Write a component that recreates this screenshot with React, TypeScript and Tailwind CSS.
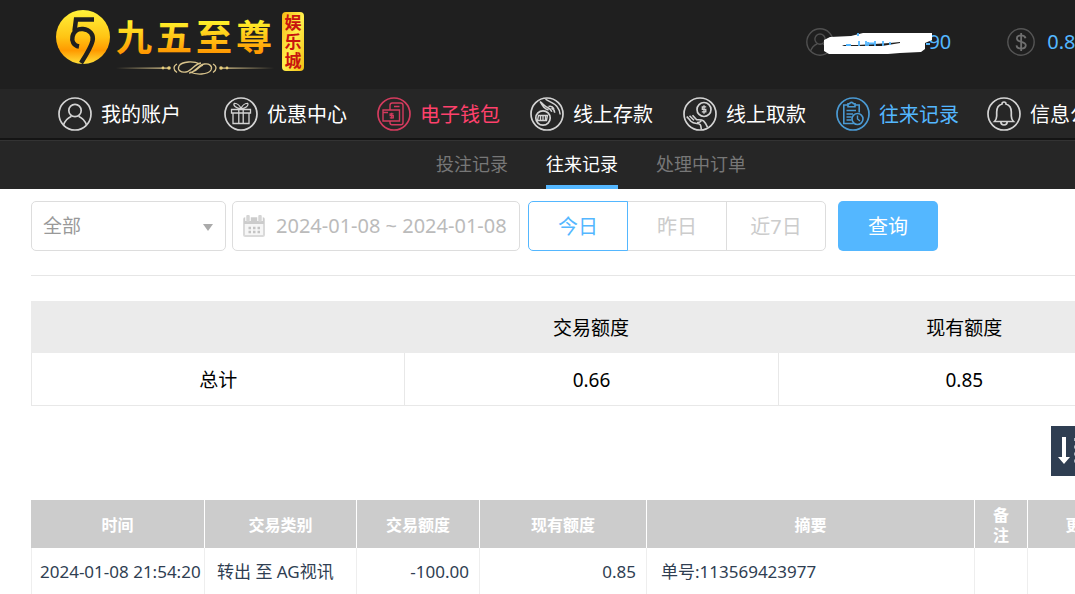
import { useState } from 'react';
import type { ReactNode } from 'react';
import clsx from 'clsx';

interface NavItem {
    label: string;
    icon: ReactNode;
    className: string;
}

const iconProps = {
    width: 34,
    height: 34,
    viewBox: '0 0 34 34',
    fill: 'none',
    stroke: 'currentColor',
    strokeWidth: 1.7,
    'aria-hidden': true,
};

function AccountIcon({ size = 34 }: { size?: number }) {
    return (
        <svg {...iconProps} width={size} height={size} className="shrink-0">
            <circle cx="17" cy="17" r="16" />
            <circle cx="17" cy="13.5" r="6.2" />
            <path d="M5.5 28c1.600-4.800 4.500-7.200 8-8.800M28.500 28c-1.600-4.800-4.500-7.200-8-8.800" />
        </svg>
    );
}

function GiftIcon() {
    return (
        <svg {...iconProps} className="shrink-0">
            <circle cx="17" cy="17" r="16" />
            <path d="M7.500 12.500h19v3.500h-19zM9 16v10.500h16V16M14.800 12.500v14M19.200 12.500v14" strokeWidth="1.3" />
            <path d="M17 11.800c-1-3-3.800-5.600-6.800-5.300-1.200 2.200 2 4.800 6.800 5.300zM17 11.800c1-3 3.800-5.600 6.800-5.300 1.200 2.200-2 4.800-6.800 5.300z" strokeWidth="1.3" />
        </svg>
    );
}

function WalletIcon() {
    return (
        <svg {...iconProps} className="shrink-0">
            <circle cx="17" cy="17" r="16" />
            <path d="M13 13V8.500c0-1.400.8-2.500 2.200-2.500h8.600c1.400 0 2.200 1 2.200 2.200v17.600c0 1.200-.8 2-2 2h-9c-1.200 0-2-.8-2-2V24M17 9.500h5.500" strokeWidth="1.4" />
            <path d="M6 13h16.500v11H6zM6 15.500h5M22.500 17v4" strokeWidth="1.4" />
            <path d="M16.500 16.800h-3.400v1.900h3.200v2.100h-3.500M14.700 15.800v6" strokeWidth="1.2" />
        </svg>
    );
}

function DepositIcon() {
    return (
        <svg {...iconProps} className="shrink-0">
            <circle cx="17" cy="17" r="16" />
            <circle cx="13" cy="21" r="7.200" />
            <path d="M8.500 18.500h9l-1 5h-9zM10.500 18v5M13 18v5M15.500 18v5" strokeWidth="1.3" />
            <path d="M10 4.500c3 2 4.500 4.800 8 6.200 2 .8 3.200 2.300 3.800 4.100M15.500 2.200c4 2.800 9 3.800 11.500 7.300 1.800 2.400 3 5 3.200 8M18.500 9.500c2.500-.8 4.300.2 5.500 2.300M21.500 11c2 .8 3 2.600 3.200 4.800M10 4.500c2.800 5 4.500 7.500 8.500 8.500" strokeWidth="1.5" />
        </svg>
    );
}

function WithdrawIcon() {
    return (
        <svg {...iconProps} className="shrink-0">
            <circle cx="17" cy="17" r="16" />
            <circle cx="21" cy="12.500" r="7" />
            <path d="M23.200 9.800h-3.900v2.500h3.500v2.600h-4M21 8.300v8.400" strokeWidth="1.3" />
            <path d="M3.800 19.500c1.400 1.800 2.800 3 4 4.800M6.500 18.800l4.500 4.400M9.500 18.300l4.200 4.400c1.800.2 5.200-.3 6.800 1.200 1.800 1.700 3.200 4.300 4 6.400M7.800 24.300c3.400 3.400 7.800 1.200 9.500 3.400.8 1.200.8 2.800 1 4.800M14 25.500c1.600.3 3-.2 4.300-1.500" strokeWidth="1.6" />
        </svg>
    );
}

function RecordIcon() {
    return (
        <svg {...iconProps} className="shrink-0">
            <circle cx="17" cy="17" r="16" />
            <path d="M12 8H7.800v18.500h10M19 8h4.200v7.500M12 6.800h1.600a2 2 0 0 1 3.800 0H19v3h-7z" strokeWidth="1.6" />
            <path d="M10.500 13.500h9.500M10.500 17h6.500M10.500 20h5M10.500 23h5" strokeWidth="1.5" />
            <circle cx="21.500" cy="22" r="5.500" strokeWidth="1.600" />
            <path d="M21.500 18.500V22l2.500 2" strokeWidth="1.400" />
        </svg>
    );
}

function BellIcon() {
    return (
        <svg {...iconProps} className="shrink-0">
            <circle cx="17" cy="17" r="16" />
            <path d="M7.500 24.500c1.500-1.500 2.200-3 2.200-5.500v-4c0-4 2-7 5.300-8a2 2 0 0 1 4 0c3.300 1 5.300 4 5.300 8v4c0 2.500.7 4 2.200 5.500z" />
            <path d="M13.800 24.800a3.200 3.200 0 0 0 6.400 0" />
        </svg>
    );
}

function DollarIcon() {
    return (
        <svg {...iconProps} width={28} height={28} className="shrink-0">
            <circle cx="17" cy="17" r="16" />
            <path d="M22.500 12.500c-.5-2.300-2.500-3.500-5.300-3.500-3 0-5.200 1.400-5.200 3.800 0 5.200 10.800 2.800 10.800 8.200 0 2.600-2.400 4-5.600 4-3.200 0-5.400-1.400-5.700-4M17.200 6v22" stroke="#707070" strokeWidth="2.200" />
        </svg>
    );
}

function Logo() {
    return (
        <svg width="250" height="68" viewBox="0 0 250 68" role="img" aria-label="九五至尊娱乐城" className="shrink-0">
            <defs>
                <linearGradient id="gold" x1="0" y1="0" x2="0" y2="1">
                    <stop offset="0" stopColor="#fff23a" />
                    <stop offset="0.5" stopColor="#ffc414" />
                    <stop offset="0.75" stopColor="#ff9a00" />
                    <stop offset="1" stopColor="#ffe03a" />
                </linearGradient>
                <linearGradient id="goldText" gradientUnits="userSpaceOnUse" x1="0" y1="12" x2="0" y2="46">
                    <stop offset="0" stopColor="#fff52c" />
                    <stop offset="1" stopColor="#ff9500" />
                </linearGradient>
                <linearGradient id="badge" x1="0" y1="0" x2="1" y2="1">
                    <stop offset="0" stopColor="#f5b814" />
                    <stop offset="0.5" stopColor="#fff04c" />
                    <stop offset="1" stopColor="#f3bd12" />
                </linearGradient>
                <linearGradient id="rule" gradientUnits="userSpaceOnUse" x1="60" y1="0" x2="218" y2="0">
                    <stop offset="0" stopColor="#d9c48c" stopOpacity="0" />
                    <stop offset="0.3" stopColor="#d9c48c" />
                    <stop offset="0.7" stopColor="#d9c48c" />
                    <stop offset="1" stopColor="#d9c48c" stopOpacity="0" />
                </linearGradient>
            </defs>
            <circle cx="27" cy="29" r="27" fill="url(#gold)" />
            <path d="M38 11.500H20L18.500 23" fill="none" stroke="#1f1f1f" strokeWidth="4.500" />
            <path d="M23 38.500c-5.500-1-7.500-5.500-6.500-10 1.200-5.500 5.500-8 10.500-7.500 7 .6 11 6 9.500 12-1.500 6.500-5.500 12.500-11.500 22" fill="none" stroke="#1f1f1f" strokeWidth="4.500" />
            <g fill="url(#goldText)" fontSize="36" fontWeight="700" className="font-['Noto_Sans_CJK_SC',sans-serif]">
                <text x="60" y="43">九</text>
                <text x="100" y="43">五</text>
                <text x="140" y="43">至</text>
                <text x="180" y="43">尊</text>
            </g>
            <g fill="none" stroke="url(#rule)" strokeWidth="1.300">
                <path d="M60 60.200h54M164 60.200h54" />
                <path d="M121 56c-4 2-4 6 0 8.500M157 56c4 2 4 6 0 8.500" />
                <path d="M144 56c-6-3-18-3-21 2-2 4 2 7 7 6 6-1 8-8 15-9M134 64c6 3 18 3 21-2 2-4-2-7-7-6-6 1-8 8-15 9M138 63c4-1 5-5 9-6" />
            </g>
            <g fill="#e8cf7c">
                <circle cx="107" cy="60" r="1.400" />
                <circle cx="113" cy="60" r="1.800" />
                <circle cx="165" cy="60" r="1.800" />
                <circle cx="171" cy="60" r="1.400" />
            </g>
            <rect x="226" y="4" width="22" height="59" rx="4" fill="url(#badge)" />
            <g fill="#c8150f" fontSize="17" fontWeight="700" textAnchor="middle" className="font-['Noto_Sans_CJK_SC',sans-serif]">
                <text x="237" y="21">娱</text>
                <text x="237" y="40">乐</text>
                <text x="237" y="59">城</text>
            </g>
        </svg>
    );
}

// Hand-painted mask over the account name
function NameMask() {
    return (
        <svg width="110" height="24" viewBox="0 0 110 24" aria-hidden="true" className="absolute left-[18px] top-[5px]">
            <path d="M0 7l6-3 21-1 12-3h69v7l-7 3v6l-4 3-21 1-12 1H5l-5-3z" fill="#fff" />
            <path d="M18 12h16l32-2 10-1v1l-18 3H20z" fill="#1f1f1f" />
            <path d="M34 0v3M35 8v5M42 8v5M51 8v5M59 8v5M22 12h5M44 10.500h7M44 9v4M66 9v3M102 11h4" stroke="#54b7ff" strokeWidth="1.800" />
        </svg>
    );
}

const navItems: NavItem[] = [
    { label: '我的账户', icon: <AccountIcon />, className: 'mr-[43px] text-white' },
    { label: '优惠中心', icon: <GiftIcon />, className: 'mr-[30px] text-white' },
    { label: '电子钱包', icon: <WalletIcon />, className: 'mr-[30px] text-[#ff416c]' },
    { label: '线上存款', icon: <DepositIcon />, className: 'mr-[30px] text-white' },
    { label: '线上取款', icon: <WithdrawIcon />, className: 'mr-[30px] text-white' },
    { label: '往来记录', icon: <RecordIcon />, className: 'mr-7 text-[#54b7ff]' },
    { label: '信息公告', icon: <BellIcon />, className: 'text-white' },
];

const tabs = ['投注记录', '往来记录', '处理中订单'];
const periods = ['今日', '昨日', '近7日'];

const records = [
    { time: '2024-01-08 21:54:20', type: '转出 至 AG视讯', amount: '-100.00', balance: '0.85', summary: '单号:113569423977', remark: '' },
];

function Filters() {
    const [period, setPeriod] = useState('今日');

    return (
        <form className="flex h-[75px] items-start border-b border-[#e6e6e6] text-xl" onSubmit={e => e.preventDefault()}>
            <div className="relative mr-1.5">
                <select aria-label="交易类别" className="h-[50px] w-[195px] appearance-none rounded-[5px] border border-[#ddd] bg-white pl-[11px] text-[19px] text-[#999]">
                    <option>全部</option>
                </select>
                <svg width="10" height="8" viewBox="0 0 10 8" aria-hidden="true" className="pointer-events-none absolute right-[13px] top-[23px]">
                    <path d="M0 0h10L5 7z" fill="#aaa" />
                </svg>
            </div>
            <label className="mr-2 flex h-[50px] w-[288px] items-center gap-[11px] rounded-[5px] border border-[#ddd] pl-2.5">
                <svg width="22" height="22" viewBox="0 0 22 22" aria-hidden="true" className="shrink-0">
                    <rect x="1" y="3" width="20" height="18" rx="1.500" fill="#f6f6f6" stroke="#dadada" strokeWidth="2" />
                    <path d="M1 3h20v6H1z" fill="#ccc" />
                    <path d="M5 0v6M17 0v6" stroke="#fff" strokeWidth="5.500" />
                    <path d="M5 1.500v4M17 1.500v4" stroke="#d5d5d5" strokeWidth="3.500" strokeLinecap="round" />
                    <path d="M5.500 13h12M5.500 17h12" stroke="#c4c4c4" strokeWidth="2.500" strokeDasharray="2.500 2" />
                </svg>
                <input aria-label="日期" className="min-w-0 flex-1 text-[#bbb] outline-none" defaultValue="2024-01-08 ~ 2024-01-08" />
            </label>
            <div className="mr-3 flex">
                {periods.map(item => (
                    <button
                        key={item}
                        type="button"
                        onClick={() => setPeriod(item)}
                        className={clsx(
                            'relative -ml-px h-[50px] w-[100px] border pt-0.5 first:ml-0 first:rounded-l-[5px] last:rounded-r-[5px]',
                            item === period ? 'z-10 border-[#54b7ff] text-[#54b7ff]' : 'border-[#ddd] text-[#ccc]'
                        )}
                    >
                        {item}
                    </button>
                ))}
            </div>
            <button type="submit" className="h-[50px] w-[100px] rounded-[5px] bg-[#54b7ff] pt-0.5 text-white">查询</button>
        </form>
    );
}

function SummaryTable() {
    return (
        <table className="mt-[25px] w-full table-fixed border-separate border-spacing-0 text-center text-[19px] text-black">
            <colgroup>
                <col className="w-1/3" />
                <col className="w-1/3" />
                <col />
            </colgroup>
            <thead>
                <tr className="h-[52px] bg-[#ebebeb]">
                    <td />
                    <th className="pt-0.5 font-normal">交易额度</th>
                    <th className="pt-0.5 font-normal">现有额度</th>
                </tr>
            </thead>
            <tbody>
                <tr className="h-[53px]">
                    <th className="border-b border-l border-[#e8e8e8] pt-0.5 font-normal">总计</th>
                    <td className="border-b border-l border-[#e8e8e8] pt-0.5">0.66</td>
                    <td className="border-x border-b border-[#e8e8e8] pt-0.5">0.85</td>
                </tr>
            </tbody>
        </table>
    );
}

function RecordTable() {
    return (
        <table className="mt-6 w-full table-fixed border-separate border-spacing-0 text-[17px] text-[#2f3e52]">
            <colgroup>
                <col className="w-[174px]" />
                <col className="w-[152px]" />
                <col className="w-[123px]" />
                <col className="w-[167px]" />
                <col />
                <col className="w-[53px]" />
                <col className="w-[123px]" />
            </colgroup>
            <thead>
                <tr className="h-12 bg-[#ccc] text-base leading-5 text-white">
                    <th className="border-r border-white pt-0.5">时间</th>
                    <th className="border-r border-white pt-0.5">交易类别</th>
                    <th className="border-r border-white pt-0.5">交易额度</th>
                    <th className="border-r border-white pt-0.5">现有额度</th>
                    <th className="border-r border-white pt-0.5">摘要</th>
                    <th className="border-r border-white px-4 pt-0.5">备注</th>
                    <th className="pt-0.5">更多项</th>
                </tr>
            </thead>
            <tbody>
                {records.map(record => (
                    <tr key={record.time} className="h-12">
                        <td className="whitespace-nowrap border-x border-b border-[#eee] pl-2">{record.time}</td>
                        <td className="whitespace-nowrap border-r border-b border-[#eee] pl-3">{record.type}</td>
                        <td className="border-r border-b border-[#eee] pr-2.5 text-right">{record.amount}</td>
                        <td className="border-r border-b border-[#eee] pr-2.5 text-right">{record.balance}</td>
                        <td className="border-r border-b border-[#eee] pl-3.5">{record.summary}</td>
                        <td className="border-r border-b border-[#eee]">{record.remark}</td>
                        <td className="border-r border-b border-[#eee]" />
                    </tr>
                ))}
            </tbody>
        </table>
    );
}

export default function App() {
    const [tab, setTab] = useState('往来记录');

    return (
        <div className="max-h-screen overflow-hidden bg-white font-['Noto_Sans','Noto_Sans_CJK_SC',sans-serif]">
            <div className="min-w-[1182px]">
                <header className="flex h-[89px] items-center justify-between bg-[#1f1f1f] pr-[95px] pb-1.5 pl-14 text-xl text-[#54b7ff]">
                    <Logo />
                    <div className="flex items-center gap-14">
                        <div className="relative flex w-[145px] items-center justify-between">
                            <span className="text-[#505050]"><AccountIcon size={28} /></span>
                            <span>90</span>
                            <NameMask />
                        </div>
                        <div className="flex items-center gap-3">
                            <span className="text-[#555]"><DollarIcon /></span>
                            <span>0.85</span>
                        </div>
                    </div>
                </header>

                <nav className="flex h-[51px] items-center border-b-2 border-[#141414] bg-[#262626] pl-[58px] text-xl">
                    {navItems.map(item => (
                        <a key={item.label} href="#" className={clsx('flex shrink-0 items-center gap-[9px]', item.className)}>
                            <span className="opacity-80">{item.icon}</span>
                            <span className="pt-0.5">{item.label}</span>
                        </a>
                    ))}
                </nav>

                <nav className="flex h-[49px] justify-center gap-[38px] border-t border-[#333] bg-[#262626] text-lg">
                    {tabs.map(item => (
                        <a
                            key={item}
                            href="#"
                            onClick={() => setTab(item)}
                            className={clsx('flex items-center border-b-4 pt-0.5', item === tab ? 'border-[#54b7ff] text-white' : 'border-transparent text-[#777]')}
                        >
                            {item}
                        </a>
                    ))}
                </nav>

                <main className="px-[31px] pt-3">
                    <Filters />
                    <SummaryTable />
                    <div className="mt-5 flex justify-end">
                        <button type="button" aria-label="排序" className="flex h-[50px] w-[100px] items-center bg-[#2f3e52] pl-[7px]">
                            <svg width="86" height="30" viewBox="0 0 86 30" aria-hidden="true">
                                <path d="M4 1h4v20h4l-6 7-6-7h4z" fill="#fff" />
                                <path d="M16 3.500h20M16 11h16M16 18h12M16 25h8" stroke="#aab2bd" strokeWidth="3" />
                            </svg>
                        </button>
                    </div>
                    <RecordTable />
                </main>
            </div>
        </div>
    );
}
